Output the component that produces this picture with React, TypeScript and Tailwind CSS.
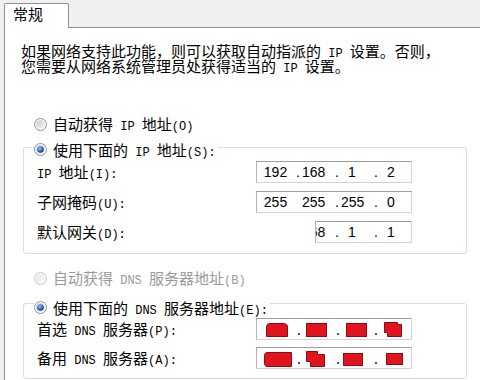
import { useId } from 'react'

const cjk = "font-['Noto_Sans_CJK_SC','Noto_Sans_CJK_JP',sans-serif]"

// SimSun-like look: half-width latin runs in a narrow monospace
function T({ children }: { children: string }) {
  const runs = children.match(/[\x20-\x7e]+|[^\x20-\x7e]+/g) || []
  return (
    <>
      {runs.map((r, i) =>
        /^[\x20-\x7e]+$/.test(r) ? (
          <span key={i} className="font-['Liberation_Mono',monospace] text-[12px] leading-none whitespace-pre">
            {r}
          </span>
        ) : (
          <span key={i}>{r}</span>
        )
      )}
    </>
  )
}

function Radio({ checked = false, disabled = false }: { checked?: boolean; disabled?: boolean }) {
  const id = useId().replace(/:/g, '')
  return (
    <svg width="13" height="13" viewBox="0 0 13 13" className="shrink-0">
      <defs>
        <linearGradient id={`f${id}`} x1="0" y1="0" x2="1" y2="1">
          <stop offset="0" stopColor={disabled ? '#e4e4e4' : '#c9c9c9'} />
          <stop offset="1" stopColor={disabled ? '#fafafa' : '#f7f7f7'} />
        </linearGradient>
        <radialGradient id={`d${id}`} cx="0.4" cy="0.35" r="0.7">
          <stop offset="0" stopColor="#9fd0f4" />
          <stop offset="0.45" stopColor="#3a7fc4" />
          <stop offset="1" stopColor="#103a66" />
        </radialGradient>
      </defs>
      <circle cx="6.5" cy="6.5" r="6" fill="#fff" stroke={disabled ? '#c2c2c2' : '#8c8f94'} />
      <circle cx="6.5" cy="6.5" r="4.6" fill={`url(#f${id})`} />
      {checked && <circle cx="6.5" cy="6.5" r="3.3" fill={`url(#d${id})`} />}
    </svg>
  )
}

function IpDigits({ parts, hideDots = [] }: { parts: string[]; hideDots?: number[] }) {
  return (
    <div className="flex items-center h-full font-['Liberation_Sans',Arial,sans-serif] text-[14px] text-black">
      <span className="w-[38px] text-center">{parts[0]}</span>
      {[1, 2, 3].map(i => (
        <div key={i} className="flex">
          <span className="w-[8px] text-center">{hideDots.includes(i) ? '' : '.'}</span>
          <span className="w-[22px] text-center">{parts[i]}</span>
          <span className="w-[9px]" />
        </div>
      ))}
    </div>
  )
}

const inputBox = 'h-[22px] bg-white border border-[#d2d2d2] border-t-[#9d9d9d] border-l-[#b4b4b4]'

function Censored({ row }: { row: 1 | 2 }) {
  const red = '#e0141e'
  const edge = '#8e0d12'
  return (
    <svg width="154" height="20" viewBox="0 0 154 20">
      {row === 1 ? (
        <g fill={red} stroke={edge} strokeWidth="1">
          <path d="M9.5 17.5 V8 Q9.5 4.5 13 4.5 H26 Q30.5 4.5 30.5 8 V17.5 Z" />
          <rect x="49.5" y="4.5" width="20" height="13" />
          <rect x="89.5" y="4.5" width="20" height="13" />
          <path d="M127.5 3.5 H140.5 V5.5 H144.5 V17.5 H130.5 V13.5 H127.5 Z" />
        </g>
      ) : (
        <g fill={red} stroke={edge} strokeWidth="1">
          <path d="M10 4.5 H34.5 V18.5 H10 Q7.5 18.5 7.5 15 V8 Q7.5 4.5 10 4.5 Z" />
          <path d="M49.5 3.5 H60.5 V6.5 H67.5 V18.5 H53.5 V13.5 H49.5 Z" />
          <rect x="86.5" y="5.5" width="19" height="12" />
          <rect x="129.5" y="5.5" width="16" height="11" />
        </g>
      )}
      <g fill="#555">
        <rect x="41" y="14" width="2" height="2" />
        <rect x="80" y="14" width="2" height="2" />
        <rect x="118" y="14" width="2" height="2" />
      </g>
    </svg>
  )
}

function Row({ label, children }: { label: string; children: React.ReactNode }) {
  return (
    <div className="flex items-center h-[22px]">
      <span className="w-[219px] h-[16px] text-[15px] leading-[16px] text-black">
        <T>{label}</T>
      </span>
      {children}
    </div>
  )
}

export default function App() {
  return (
    <div className={`w-[480px] h-[380px] overflow-hidden bg-[#f0f0f0] flex flex-col ${cjk}`}>
      {/* Tab strip */}
      <div className="h-[27px] shrink-0">
        <div className="relative z-10 ml-[4px] mt-[3px] w-[65px] h-[25px] bg-white border border-b-0 border-[#8e8f94] rounded-t-[2px] pl-[8px] pt-[2px] text-[15px] leading-[16px] text-black">
          常规
        </div>
      </div>

      {/* Panel */}
      <div className="flex-1 ml-[4px] bg-white border-l border-t border-[#8e8f94]">
        <div className="ml-[16px] mt-[15px] text-[15px] leading-[15px] text-black whitespace-nowrap">
          <div className="h-[15px]">
            <T>如果网络支持此功能，则可以获取自动指派的 IP 设置。否则，</T>
          </div>
          <div className="h-[15px]">
            <T>您需要从网络系统管理员处获得适当的 IP 设置。</T>
          </div>
        </div>

        <div className="ml-[29px] mt-[43px] flex items-center gap-[6px] h-[16px] text-[15px] leading-[16px] text-black">
          <Radio />
          <span className="h-[16px]">
            <T>自动获得 IP 地址(O)</T>
          </span>
        </div>

        {/* IP group */}
        <div className="ml-[18px] mt-[5px] w-[444px]">
          <div className="relative z-10 pl-[11px] h-[16px]">
            <div className="inline-flex items-center gap-[6px] bg-white pr-[2px] h-[16px] text-[15px] leading-[16px] text-black">
              <Radio checked />
              <span className="h-[16px]">
                <T>使用下面的 IP 地址(S):</T>
              </span>
            </div>
          </div>
          <div className="-mt-[6px] border border-[#d5dfe5] rounded-[3px] pt-[13px] pb-[10px] pl-[13px] flex flex-col gap-[8px]">
            <Row label="IP 地址(I):">
              <div className={`${inputBox} w-[156px]`}>
                <IpDigits parts={['192', '168', '1', '2']} />
              </div>
            </Row>
            <Row label="子网掩码(U):">
              <div className={`${inputBox} w-[156px]`}>
                <IpDigits parts={['255', '255', '255', '0']} hideDots={[1]} />
              </div>
            </Row>
            <Row label="默认网关(D):">
              <div className={`${inputBox} w-[97px] ml-[59px] overflow-hidden`}>
                <div className="-ml-[59px] h-full">
                  <IpDigits parts={['192', '168', '1', '1']} />
                </div>
              </div>
            </Row>
          </div>
        </div>

        <div className="ml-[29px] mt-[16px] flex items-center gap-[6px] h-[16px] text-[15px] leading-[16px] text-[#9a9a9a]">
          <Radio disabled />
          <span className="h-[16px]">
            <T>自动获得 DNS 服务器地址(B)</T>
          </span>
        </div>

        {/* DNS group */}
        <div className="ml-[18px] mt-[9px] w-[444px]">
          <div className="relative z-10 pl-[11px] h-[16px]">
            <div className="inline-flex items-center gap-[6px] bg-white pr-[2px] h-[16px] text-[15px] leading-[16px] text-black">
              <Radio checked />
              <span className="h-[16px]">
                <T>使用下面的 DNS 服务器地址(E):</T>
              </span>
            </div>
          </div>
          <div className="-mt-[8px] border border-[#d5dfe5] rounded-[3px] pt-[14px] pb-[9px] pl-[13px] flex flex-col gap-[7px]">
            <Row label="首选 DNS 服务器(P):">
              <div className={`${inputBox} w-[156px]`}>
                <Censored row={1} />
              </div>
            </Row>
            <Row label="备用 DNS 服务器(A):">
              <div className={`${inputBox} w-[156px]`}>
                <Censored row={2} />
              </div>
            </Row>
          </div>
        </div>
      </div>
    </div>
  )
}
